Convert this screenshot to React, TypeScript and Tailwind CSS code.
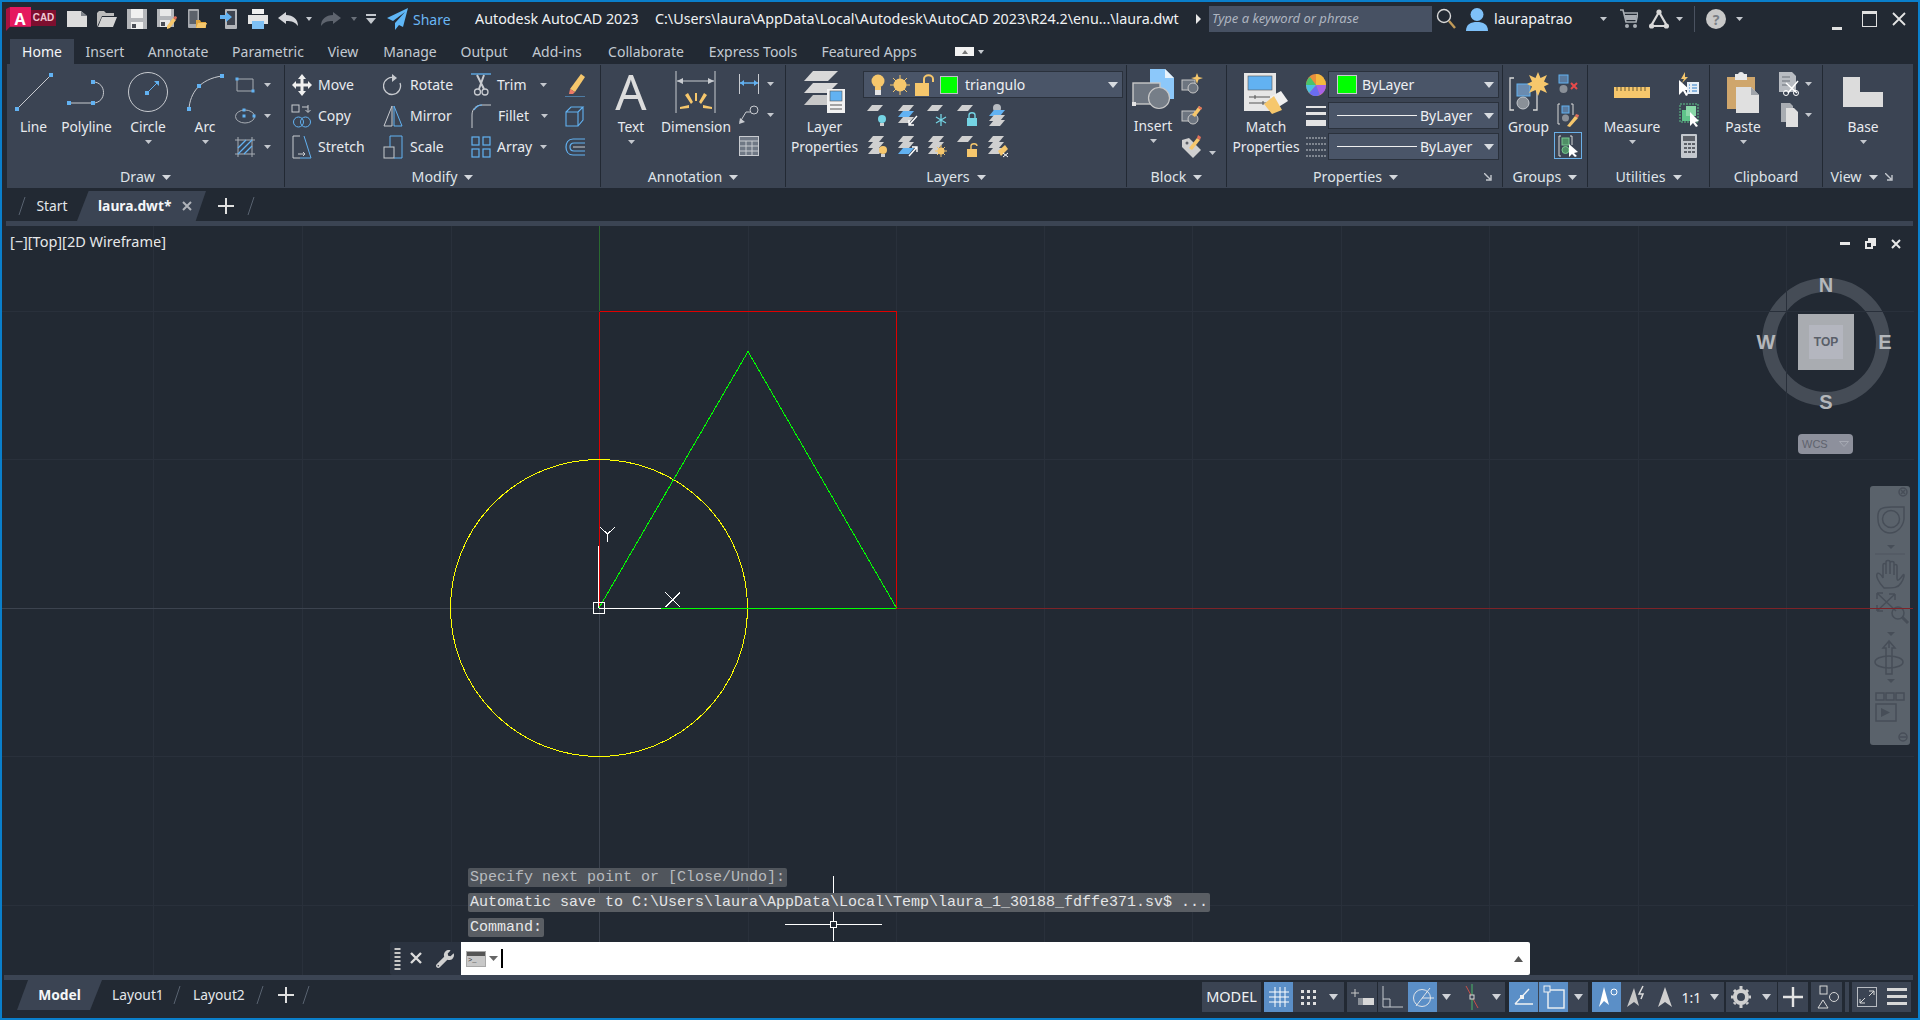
import React from "react";
import { FaWrench } from "react-icons/fa";

const G = "#c8cbd0";
const D = "#a8adb4";
const B = "#62b2f2";
const Y = "#f6c76c";
const W = "#ffffff";

type SP = { w: number; h: number; children?: React.ReactNode };
const S = ({ w, h, children }: SP) => (
  <svg width={w} height={h} viewBox={`0 0 ${w} ${h}`} fill="none" className="shrink-0">
    {children}
  </svg>
);
const Sq = ({ x, y, s = 4, c = B }: { x: number; y: number; s?: number; c?: string }) => (
  <rect x={x - s / 2} y={y - s / 2} width={s} height={s} fill={c} />
);

const Caret = ({ c = "#c4c8ce", w = 8, h = 5 }: { c?: string; w?: number; h?: number }) => (
  <S w={w} h={h}>
    <path d={`M0 0H${w}L${w / 2} ${h}Z`} fill={c} />
  </S>
);
const Slash = () => (
  <S w={10} h={20}>
    <path d="M8 1L2 19" stroke="#586270" />
  </S>
);
const Expander = () => (
  <S w={8} h={8}>
    <path d="M0 0L6 6M7 2V7H2" stroke="#c4c8ce" strokeWidth="1.4" />
  </S>
);

/* ---------- quick access ---------- */
const INew = () => (
  <S w={20} h={16}><path d="M0 0H14L20 5V16H0Z" fill="#dcdcdc" /><path d="M14 0V5H20Z" fill="#7e838a" /></S>
);
const IOpen = () => (
  <S w={20} h={16}><path d="M0 16V2L2 0H7L9 2H17V5H5L0 16Z" fill="#bcbcbc" /><path d="M5 6H20L16 16H1Z" fill="#d4d4d4" /></S>
);
const ISave = () => (
  <S w={20} h={20}><path d="M0 0H20V20H0Z" fill="#b4b6ba" /><path d="M4 0H16V9H4Z" fill="#f0f0f0" /><path d="M4 13H16V20H4Z" fill="#f0f0f0" /><path d="M5 15H9V19H5Z" fill="#4a4e56" /></S>
);
const ISaveAs = () => (
  <S w={20} h={20}><path d="M0 0H17V18H0Z" fill="#b4b6ba" /><path d="M3 0H14V7H3Z" fill="#e8e8e8" /><path d="M3 11H13V18H3Z" fill="#e8e8e8" /><path d="M4 13H8V17H4Z" fill="#4a4e56" /><path d="M10 17L16 9L19 11L13 19L10 20Z" fill={Y} /><path d="M16 9L19 11L20 8L18 7Z" fill="#e2705a" /></S>
);
const IWebOpen = () => (
  <S w={19} h={20}><rect x="0" y="0" width="11" height="19" rx="1" fill="#a8abb0" /><rect x="1.500" y="2" width="8" height="13" fill="#5c626b" /><path d="M8 11H12L13 13H18V19H8Z" fill="#e0a53e" /><path d="M8 19L10 14H19L17 19Z" fill={Y} /></S>
);
const IWebSave = () => (
  <S w={17} h={20}><rect x="5" y="0" width="12" height="20" rx="1" fill="#b4b6ba" /><rect x="7" y="2" width="8" height="14" fill="#3f4550" /><path d="M0 6H6V3L12 8L6 13V10H0Z" fill={B} /></S>
);
const IPrint = () => (
  <S w={20} h={20}><path d="M4 0H16V5H4Z" fill="#f0f0f0" /><path d="M0 6H20V15H0Z" fill="#e4e4e4" /><path d="M4 12H16V20H4Z" fill="#7ec0f4" /></S>
);
const IUndo = () => (
  <S w={20} h={14}><path d="M0 6L8 0V3C15 3 20 7 20 14C17 10 14 9 8 9V12Z" fill="#d4d6da" /></S>
);
const IRedo = () => (
  <S w={20} h={14}><path d="M20 6L12 0V3C5 3 0 7 0 14C3 10 6 9 12 9V12Z" fill="#5e646e" /></S>
);
const IPlane = () => (
  <S w={21} h={22}><path d="M21 0L0 10L6 13L18 4L8 15V22L12 17L16 19Z" fill="#5fb6f6" /></S>
);

/* ---------- draw ---------- */
const ILine = () => (
  <S w={40} h={40}><path d="M3 37L37 3" stroke={G} /><Sq x={3} y={37} /><Sq x={37} y={3} /></S>
);
const IPoly = () => (
  <S w={42} h={26}><path d="M3 24H27M27 3C41 3 41 24 27 24" stroke={G} /><Sq x={3} y={24} /><Sq x={27} y={24} /><Sq x={27} y={3} /></S>
);
const ICircle = () => (
  <S w={42} h={42}><circle cx="21" cy="21" r="19.500" stroke={G} /><path d="M20 22L31 11" stroke={B} /><path d="M27 10H32V15Z" fill={B} /><Sq x={20} y={22} /></S>
);
const IArc = () => (
  <S w={38} h={38}><path d="M3 36C4 20 14 6 36 3" stroke={G} /><Sq x={3} y={36} /><Sq x={13} y={13} /><Sq x={36} y={3} /></S>
);
const IRectS = () => (
  <S w={20} h={16}><path d="M2 2H18V14H2Z" stroke={D} /><Sq x={2} y={2} s={3} /><Sq x={18} y={14} s={3} /></S>
);
const IEllS = () => (
  <S w={22} h={16}><ellipse cx="11" cy="8.500" rx="9.500" ry="6.500" stroke={D} /><Sq x={10} y={2} s={3} /><Sq x={20} y={8} s={3} /><Sq x={10} y={8} s={3} /></S>
);
const IHatch = () => (
  <S w={20} h={20}><path d="M0 3H20M0 17H20M3 0V20M17 0V20" stroke={D} /><path d="M3 11L11 3M3 17L17 3M9 17L17 9" stroke={B} strokeWidth="1.300" /></S>
);

/* ---------- modify ---------- */
const IMove = () => (
  <S w={20} h={22}><path d="M10 0L14 5H11.500V9.500H16V7L20 11L16 15V12.500H11.500V17H14L10 22L6 17H8.500V12.500H4V15L0 11L4 7V9.500H8.500V5H6Z" fill="#f0f0f0" /></S>
);
const ICopy = () => (
  <S w={22} h={24}><rect x="1" y="1" width="7" height="7" stroke={G} fill="none" /><path d="M11 3H17M17 1V8M14.500 6L17 8.500L19.500 6" stroke={G} /><circle cx="7.500" cy="18" r="5" stroke={B} /><circle cx="14.500" cy="18" r="5" stroke={B} /></S>
);
const IStretch = () => (
  <S w={20} h={24}><path d="M8 23H1V1H8" stroke={G} /><path d="M12 1L19 23H8" stroke={B} /><path d="M6 19H13M11 17L13 19L11 21" stroke={G} /></S>
);
const IRotate = () => (
  <S w={20} h={24}><path d="M12 5A8.500 8.500 0 1 0 17 10" stroke={G} strokeWidth="1.300" /><path d="M9 1L14 5L9 9Z" fill={G} /></S>
);
const IMirror = () => (
  <S w={20} h={24}><path d="M9 2L1 22H9Z" stroke={G} /><path d="M11 2L19 22H11Z" stroke={B} /></S>
);
const IScale = () => (
  <S w={20} h={24}><rect x="1" y="12" width="10" height="11" stroke={G} /><path d="M7 12V1H19V23H11" stroke={B} /></S>
);
const ITrim = () => (
  <S w={20} h={24}><path d="M0 1H20" stroke={B} strokeWidth="1.300" /><path d="M6 2L13 16M13 2L8 16" stroke={G} strokeWidth="2" /><circle cx="6.500" cy="19" r="3" stroke={G} strokeWidth="1.300" /><circle cx="14" cy="19" r="3" stroke={G} strokeWidth="1.300" /></S>
);
const IFillet = () => (
  <S w={20} h={24}><path d="M1 24V11C1 5 5 1 11 1H20" stroke={G} /><path d="M3 6C5 3 8 1 11 1" stroke={B} strokeWidth="1.200" /></S>
);
const IArray = () => (
  <S w={20} h={22}><rect x="1" y="1" width="7" height="8" stroke={B} strokeWidth="1.200" /><rect x="12" y="1" width="7" height="8" stroke={B} strokeWidth="1.200" /><rect x="1" y="13" width="7" height="8" stroke={B} strokeWidth="1.200" /><rect x="12" y="13" width="7" height="8" stroke={B} strokeWidth="1.200" /></S>
);
const IErase = () => (
  <S w={20} h={24}><path d="M5 16L16 1L20 4L10 19Z" fill={Y} /><path d="M5 16L10 19L8 21H4Z" fill="#ec7a66" /><path d="M0 24H20" stroke={B} /></S>
);
const IExplode = () => (
  <S w={20} h={22}><path d="M1 7H13V21H1ZM1 7L6 2H18L13 7M18 2V15L13 21" stroke={B} strokeWidth="1.100" /></S>
);
const IOffset = () => (
  <S w={20} h={20}><path d="M20 2H8C3 2 1 6 1 10C1 14 3 18 8 18H20M20 6H9C6 6 5 8 5 10C5 12 6 14 9 14H20" stroke={B} strokeWidth="1.200" /><path d="M8 10H20" stroke={G} /></S>
);

/* ---------- annotation ---------- */
const IDim = () => (
  <S w={42} h={42}><path d="M1 0V42M40 0V42" stroke={G} /><path d="M2 10H39" stroke={G} /><path d="M2 10L8 7V13ZM39 10L33 7V13Z" fill={G} /><path d="M20 22H22L22 30H20ZM10 24L13 22L18 31L16 33ZM32 24L29 22L24 31L26 33ZM5 36L14 34V37L5 38ZM37 36L28 34V37L37 38Z" fill={Y} /></S>
);
const IDimS = () => (
  <S w={20} h={20}><path d="M0.500 0V20M19.500 0V20" stroke={G} /><path d="M1 9H19" stroke={B} strokeWidth="1.500" /><path d="M1 9L5 6V12ZM19 9L15 6V12Z" fill={B} /></S>
);
const ILeader = () => (
  <S w={20} h={20}><circle cx="15" cy="5" r="4" stroke={G} /><path d="M11 7H7L1 17" stroke={G} /><path d="M0 19L1 13L6 17Z" fill={G} /></S>
);
const ITable = () => (
  <S w={20} h={20}><rect x="0.500" y="0.500" width="19" height="19" fill="#6f7885" stroke={G} /><path d="M0 5H20M0 10H20M0 15H20M7 5V20M13 5V20" stroke={G} /></S>
);

/* ---------- layers ---------- */
const ILayerProps = () => (
  <S w={42} h={42}>
    <path d="M9 0H34L24 10H0Z" fill="#d8d8d8" />
    <path d="M9 12H34L24 22H0Z" fill="#d8d8d8" />
    <path d="M9 24H34L24 34H0Z" fill="#c8c8c8" />
    <rect x="23" y="18" width="18" height="24" fill="#f2f2f2" />
    <rect x="26" y="20" width="12" height="10" fill={B} stroke="#555" strokeWidth="0.600" />
    <path d="M26 34H38M26 38H38" stroke="#555" />
  </S>
);
const Plate = ({ y = 0, c = "#d0d0d0", x = 0 }: { y?: number; c?: string; x?: number }) => (
  <path d={`M${x + 5} ${y}H${x + 16}L${x + 11} ${y + 6}H${x}Z`} fill={c} />
);
const ILay = ({ n }: { n: number }) => {
  const plates3 = (c = "#d0d0d0") => (
    <>
      <Plate y={1} c={c} x={1} />
      <Plate y={7} c={c} x={1} />
      <Plate y={13} c={c} x={1} />
    </>
  );
  const items: Record<number, React.ReactNode> = {
    0: <><Plate y={1} x={0} /><circle cx="15" cy="15" r="4" fill="#74d4e4" /><rect x="13" y="19" width="4" height="3" fill="#d0d0d0" /></>,
    1: <><Plate y={1} x={1} /><Plate y={7} c={B} x={1} /><Plate y={13} x={1} /><path d="M20 12L12 21M12 16V21H17" stroke={W} strokeWidth="1.400" /></>,
    2: <><Plate y={1} x={0} /><path d="M14 10V22M9 13L19 19M19 13L9 19" stroke="#74d4e4" strokeWidth="1.300" /></>,
    3: <><Plate y={1} x={0} /><rect x="10" y="14" width="10" height="8" fill="#74d4e4" /><path d="M12 14V11C12 8 18 8 18 11V14" stroke="#74d4e4" strokeWidth="1.400" /></>,
    4: <><circle cx="10" cy="4" r="4" fill="#b8bcc2" /><Plate y={6} c={B} x={2} /><Plate y={11} x={2} /><Plate y={16} x={2} /></>,
    5: <>{plates3()}<circle cx="16" cy="15" r="4" fill={Y} /><rect x="14" y="19" width="4" height="3" fill="#d0d0d0" /></>,
    6: <><Plate y={1} x={1} /><Plate y={7} x={1} /><Plate y={13} c={B} x={1} /><path d="M12 21L20 12M15 12H20V17" stroke={W} strokeWidth="1.400" /></>,
    7: <>{plates3()}<circle cx="14" cy="16" r="3.500" fill={Y} /><path d="M14 10V22M8 16H20M10 12L18 20M18 12L10 20" stroke={Y} /></>,
    8: <><Plate y={1} x={0} /><rect x="10" y="14" width="10" height="8" fill={Y} /><path d="M14 14V11C14 8 20 8 20 11" stroke={Y} strokeWidth="1.400" /></>,
    9: <>{plates3()}<path d="M11 16L18 10L21 14L14 21Z" fill={Y} /><path d="M16 18L21 22M21 18L16 22" stroke={W} /></>,
  };
  return <S w={22} h={23}>{items[n]}</S>;
};
const IBulb = () => (
  <S w={14} h={22}><circle cx="7" cy="7" r="6.500" fill={Y} /><rect x="4" y="13" width="6" height="3" fill={Y} /><rect x="4" y="16" width="6" height="5" fill="#e4e4e4" /></S>
);
const ISun = () => (
  <S w={20} h={20}><circle cx="10" cy="10" r="6.500" fill={Y} /><path d="M10 0V20M0 10H20M3 3L17 17M17 3L3 17" stroke={Y} /></S>
);
const ILock = () => (
  <S w={20} h={22}><rect x="0" y="9" width="14" height="13" fill={Y} /><path d="M9 9V5C9 0 18 0 18 5V8" stroke={Y} strokeWidth="2" /></S>
);

/* ---------- block ---------- */
const IInsert = () => (
  <S w={42} h={42}>
    <path d="M18 0H33L42 9V30H18Z" fill="#8cc8fa" />
    <path d="M33 0V9H42Z" fill="#e8f2fa" />
    <rect x="1" y="14" width="27" height="21" fill="#6d7580" stroke="#c8c8c8" strokeWidth="1.400" />
    <circle cx="27" cy="29" r="10.500" fill="#767e88" stroke="#c8c8c8" strokeWidth="1.200" />
    <Sq x={2} y={35} c="#e4e4e4" />
  </S>
);
const IBlockA = () => (
  <S w={22} h={22}><rect x="1" y="7" width="13" height="10" stroke="#c8c8c8" fill="#6d7580" /><circle cx="12" cy="15" r="5" fill="#6d7580" stroke="#c8c8c8" /><path d="M16 0L17.500 4L22 5L17.500 6.500L16 11L14.500 6.500L10 5L14.500 4Z" fill={Y} /></S>
);
const IBlockB = () => (
  <S w={22} h={22}><rect x="1" y="7" width="13" height="10" stroke="#c8c8c8" fill="#6d7580" /><circle cx="12" cy="15" r="5" fill="#6d7580" stroke="#c8c8c8" /><path d="M11 11L18 2L21 4L14 13Z" fill={Y} /><path d="M18 2L21 4L20 6L17 4Z" fill="#e2705a" /></S>
);
const IBlockC = () => (
  <S w={22} h={24}><path d="M1 6L8 4L20 16L12 24L1 13Z" fill="#d0d0d0" /><path d="M8 14L16 4L19 6L11 16Z" fill={Y} /><path d="M16 4L19 6L20 3L17 1Z" fill="#e2705a" /><circle cx="6" cy="9" r="1.500" fill="#5c6068" /></S>
);

/* ---------- properties ---------- */
const IMatch = () => (
  <S w={44} h={44}>
    <rect x="0" y="3" width="32" height="38" fill="#e6e6e6" />
    <rect x="4" y="6" width="24" height="14" fill={B} stroke="#555" strokeWidth="0.600" />
    <path d="M5 27H26M5 33H26M11 25V29M19 31V35" stroke="#555" />
    <path d="M26 27L37 21L44 31L33 38Z" fill="#f0f0f0" />
    <path d="M20 34L30 26L38 40L28 44Z" fill={Y} />
  </S>
);
const IWheel = () => (
  <S w={20} h={22}>
    <ellipse cx="10" cy="11" rx="10" ry="11" fill="#e98f3c" />
    <path d="M10 11L10 0A10 11 0 0 1 20 11Z" fill="#f4b93e" />
    <path d="M10 11H20A10 11 0 0 1 14 21Z" fill="#a861e8" />
    <path d="M10 11L14 21A10 11 0 0 1 3 19Z" fill="#6a6cf0" />
    <path d="M10 11L3 19A10 11 0 0 1 0 11Z" fill="#4ac0e0" />
    <path d="M10 11H0A10 11 0 0 1 4 3Z" fill="#48c46c" />
  </S>
);
const ILweight = () => (
  <S w={20} h={22}><rect y="1" width="20" height="2" fill="#e4e4e4" /><rect y="7" width="20" height="3" fill="#e4e4e4" /><rect y="15" width="20" height="6" fill="#e4e4e4" /></S>
);
const ILtype = () => (
  <S w={20} h={20}><path d="M0 1H20M0 7H20M0 13H20M0 19H20" stroke="#c4c8ce" strokeDasharray="2 1" /></S>
);

/* ---------- groups ---------- */
const IGroup = () => (
  <S w={40} h={40}>
    <path d="M5 6H1V38H5M28 14V38H24" stroke="#d8d8d8" strokeWidth="1.300" />
    <rect x="8" y="12" width="13" height="12" fill="#6a8bb0" stroke={B} />
    <circle cx="14" cy="31" r="6" fill="#8a9098" stroke="#c4c8ce" />
    <path d="M29 0L31.500 6L38 3L35 9.500L40 12L35 14.500L38 21L31.500 18L29 24L26.500 18L20 21L23 14.500L18 12L23 9.500L20 3L26.500 6Z" fill={Y} />
  </S>
);
const IGrpA = () => (
  <S w={20} h={20}><rect x="1" y="1" width="9" height="8" fill="#5a7a9e" stroke={B} /><circle cx="5.500" cy="15" r="4" fill="#8a9098" /><path d="M13 9L19 15M19 9L13 15" stroke="#e84a4a" strokeWidth="2" /></S>
);
const IGrpB = () => (
  <S w={22} h={24}><path d="M3 1H1V21H3M14 1H16V12" stroke="#d8d8d8" /><rect x="5" y="3" width="7" height="7" fill="#5a7a9e" stroke={B} /><circle cx="8.500" cy="15" r="3.500" fill="#8a9098" /><path d="M10 23L18 13L21 15L13 24Z" fill={Y} /><path d="M18 13L21 15L22 12L19 11Z" fill="#e2705a" /></S>
);
const IGrpC = () => (
  <S w={20} h={22}><path d="M3 1H1V21H3M12 1H14V10" stroke="#d8d8d8" /><rect x="4" y="3" width="7" height="7" fill="#4f8f66" stroke="#78c890" /><circle cx="7.500" cy="15" r="3.500" fill="#4f8f66" stroke="#78c890" /><path d="M11 9V22L14 19L17 22L19 21L16 18L20 17Z" fill={W} /></S>
);

/* ---------- utilities ---------- */
const IRuler = () => (
  <S w={36} h={11}><rect width="36" height="11" fill={Y} /><path d="M3 0V4M7 0V4M11 0V4M15 0V4M19 0V4M23 0V4M27 0V4M31 0V4" stroke="#6a5a30" /></S>
);
const IQSelect = () => (
  <S w={20} h={24}><path d="M0 8V23L4 19L7 24L9 23L6 18H11Z" fill={W} /><rect x="8" y="10" width="12" height="12" fill="#e6eef6" /><path d="M10 13H11M13 13H18M10 16H11M13 16H18M10 19H11M13 19H18" stroke="#2d7cc8" /><path d="M6 0L2 7H5L3 11L9 5H6Z" fill={Y} /></S>
);
const ISelGrp = () => (
  <S w={20} h={24}><rect x="1" y="1" width="18" height="18" stroke="#5fc48a" strokeDasharray="2 1" /><rect x="3" y="7" width="10" height="11" fill="#5fc48a" /><rect x="7" y="3" width="10" height="10" fill="#8ad8a8" /><path d="M11 9V23L14 20L17 24L19 23L16 19L20 18Z" fill={W} /></S>
);
const ICalc = () => (
  <S w={16} h={24}><rect width="16" height="24" rx="1" fill="#c4c8ce" /><rect x="2" y="2" width="12" height="5" fill="#5c6068" /><path d="M3 10H6M7 10H10M11 10H14M3 14H6M7 14H10M11 14H14M3 18H6M7 18H10M11 18H14" stroke="#5c6068" strokeWidth="2" /></S>
);

/* ---------- clipboard / view ---------- */
const IPaste = () => (
  <S w={32} h={41}>
    <rect x="0" y="5" width="28" height="32" fill="#cfa66c" />
    <rect x="8" y="2" width="12" height="6" fill="#e8e8e8" />
    <circle cx="14" cy="3" r="3" fill="#e8e8e8" />
    <path d="M9 15H24L32 23V41H9Z" fill="#e0e0e0" />
    <path d="M24 15V23H32Z" fill="#a0a4aa" />
  </S>
);
const ICut = () => (
  <S w={22} h={24}><path d="M1 0H14L18 4V20H1Z" fill="#b8bcc2" /><path d="M4 5H12M4 9H12M4 13H10" stroke="#6a7079" /><path d="M8 11L19 21M20 9L10 21" stroke={W} strokeWidth="1.500" /><circle cx="8" cy="21" r="2.500" stroke={W} /><circle cx="18" cy="21" r="2.500" stroke={W} /></S>
);
const ICopyS = () => (
  <S w={18} h={24}><path d="M1 0H10L13 3V19H1Z" fill="#a8acb2" /><path d="M6 5H14L18 9V24H6Z" fill="#e0e0e0" /></S>
);
const IBase = () => (
  <S w={40} h={30}><path d="M0 0H17V15H40V30H0Z" fill="#dcdcdc" /></S>
);

/* ---------- top right ---------- */
const ISearch = () => (
  <S w={20} h={22}><circle cx="8" cy="8" r="6.500" stroke="#d8d8d8" strokeWidth="1.400" /><path d="M13 13L19 20" stroke="#c09a58" strokeWidth="2.400" /></S>
);
const IUser = () => (
  <S w={22} h={24}><circle cx="11" cy="7.500" r="6.500" fill="#7ec0f8" /><path d="M0 24C0 17 5 15 11 15C17 15 22 17 22 24Z" fill="#7ec0f8" /></S>
);
const ICart = () => (
  <S w={18} h={20}><path d="M0 1H3L6 13H16L18 4H4" stroke={D} strokeWidth="1.600" /><path d="M4 6H17L16 11H6Z" fill={D} /><circle cx="7" cy="17" r="2" fill={D} /><circle cx="15" cy="17" r="2" fill={D} /></S>
);
const IA360 = () => (
  <S w={20} h={20}><path d="M10 3L2 17H18Z" stroke="#d8d8d8" strokeWidth="2.200" /><circle cx="10" cy="3" r="2.600" fill="#d8d8d8" /><circle cx="2.600" cy="17" r="2.600" fill="#d8d8d8" /><circle cx="17.400" cy="17" r="2.600" fill="#d8d8d8" /></S>
);

/* ---------- ribbon building blocks ---------- */
const Big = ({ w, icon, label, caret, two }: { w: string; icon: React.ReactNode; label: string; caret?: boolean; two?: string }) => (
  <div className={`${w} flex shrink-0 flex-col items-center pt-[4px]`}>
    <div className="flex h-[48px] items-center justify-center">{icon}</div>
    <div className="mt-[1px] h-[20px] text-center text-[13.8px] leading-[20px] whitespace-nowrap text-[#e8ebef]">{label}</div>
    {two && <div className="h-[20px] text-center text-[13.8px] leading-[20px] whitespace-nowrap text-[#e8ebef]">{two}</div>}
    {caret && (
      <div className="mt-[3px] flex justify-center">
        <Caret w={7} h={4} />
      </div>
    )}
  </div>
);

const Row = ({ icon, text, caret, iw = "w-[22px]", tw, gap = "ml-[5px]" }: { icon: React.ReactNode; text?: string; caret?: boolean; iw?: string; tw?: string; gap?: string }) => (
  <div className="flex h-[31px] items-center">
    <div className={`${iw} flex shrink-0 items-center justify-center`}>{icon}</div>
    {text && <div className={`${gap} ${tw ?? ""} text-[14px] whitespace-nowrap text-[#e8ebef]`}>{text}</div>}
    {caret && <Caret w={7} h={4} />}
  </div>
);

const Panel = ({ w, label, caret = true, children, exp }: { w: string; label: string; caret?: boolean; children: React.ReactNode; exp?: string }) => (
  <div className={`${w} flex h-[124px] shrink-0 flex-col`}>
    <div className="relative flex h-[103px]">{children}</div>
    <div className="flex h-[20px] items-center">
      <div className="flex flex-1 items-center justify-center gap-[7px] text-[14.2px] text-[#dfe3e8]">
        <span>{label}</span>
        {caret && <Caret w={9} h={5} c="#d4d8dd" />}
      </div>
      {exp && (
        <div className={`${exp} flex items-center`}>
          <Expander />
        </div>
      )}
    </div>
  </div>
);

const Sep = () => <div className="my-[1px] w-[1px] shrink-0 bg-[#222933]" />;

const Combo = ({ children, w }: { children: React.ReactNode; w: string }) => (
  <div className={`${w} flex h-[27px] shrink-0 items-center border border-[#2a313c] bg-[#4a5568] text-[14px] text-[#eef0f3]`}>
    {children}
    <div className="mr-[4px] ml-auto">
      <Caret w={10} h={6} c="#d8dce1" />
    </div>
  </div>
);

/* ---------- status bar ---------- */
const St = ({ w, on, children }: { w: string; on?: boolean; children?: React.ReactNode }) => (
  <div className={`${w} flex h-[30px] shrink-0 items-center justify-center ${on ? "bg-[#5b8fc7]" : ""}`}>{children}</div>
);
const Grp = ({ children, m = "" }: { children: React.ReactNode; m?: string }) => <div className={`${m} flex h-[30px] shrink-0 items-center bg-[#3b4453]`}>{children}</div>;
const SC = ({ w = "w-[12px]" }: { w?: string }) => (
  <div className={`${w} flex shrink-0 justify-center`}>
    <Caret w={9} h={6} c="#d0d3d8" />
  </div>
);

const App = () => {
  const gridX = [153, 302, 451, 748, 896, 1044, 1192, 1341, 1489, 1638, 1786];
  const gridY = [311, 459, 756, 905];
  return (
    <div className="flex h-[1020px] w-[1920px] flex-col overflow-hidden border-2 border-[#0a7fcb] bg-[#222933] font-['Noto_Sans','Open_Sans',sans-serif]">
      {/* title bar */}
      <div className="flex h-[34px] shrink-0 items-center text-[14.3px] text-[#f0f2f4]">
        <div className="ml-[4px] flex w-[50px] shrink-0 items-center">
          <div className="flex h-[24px] w-[25px] items-center justify-center bg-[linear-gradient(90deg,#a8123f_16%,#e5195f_16%)] pl-[3px] text-[16px] font-bold text-white [clip-path:polygon(0_8%,16%_0,100%_0,100%_82%,16%_82%,0_100%)]">A</div>
          <div className="mb-[3px] flex h-[16px] w-[25px] items-center justify-center bg-[#7d0f2f] font-['Liberation_Sans',sans-serif] text-[10px] font-bold text-[#f0c8d4]">CAD</div>
        </div>
        <div className="ml-[6px] flex w-[30px] shrink-0 justify-center"><INew /></div>
        <div className="flex w-[30px] shrink-0 justify-center"><IOpen /></div>
        <div className="flex w-[30px] shrink-0 justify-center"><ISave /></div>
        <div className="flex w-[30px] shrink-0 justify-center"><ISaveAs /></div>
        <div className="flex w-[30px] shrink-0 justify-center"><IWebOpen /></div>
        <div className="ml-[1px] flex w-[30px] shrink-0 justify-center"><IWebSave /></div>
        <div className="flex w-[29px] shrink-0 justify-center"><IPrint /></div>
        <div className="ml-[1px] flex w-[30px] shrink-0 justify-center"><IUndo /></div>
        <div className="flex w-[12px] shrink-0 justify-center"><Caret w={6} h={4} /></div>
        <div className="ml-[1px] flex w-[30px] shrink-0 justify-center"><IRedo /></div>
        <div className="ml-[2px] flex w-[12px] shrink-0 justify-center"><Caret w={6} h={4} c="#6a7079" /></div>
        <div className="ml-[5px] flex w-[12px] shrink-0 flex-col items-center gap-[2px]">
          <div className="h-[2px] w-[10px] bg-[#c4c8ce]" />
          <Caret w={10} h={6} />
        </div>
        <div className="ml-[8px] flex w-[24px] shrink-0 justify-center"><IPlane /></div>
        <div className="ml-[4px] w-[62px] shrink-0 text-[14px] text-[#6ab7f5]">Share</div>
        <div className="w-[180px] shrink-0 whitespace-nowrap">Autodesk AutoCAD 2023</div>
        <div className="w-[537px] shrink-0 whitespace-nowrap">C:\Users\laura\AppData\Local\Autodesk\AutoCAD 2023\R24.2\enu...\laura.dwt</div>
        <div className="flex w-[12px] shrink-0 justify-center">
          <S w={5} h={10}><path d="M0 0L5 5L0 10Z" fill="#e8e8e8" /></S>
        </div>
        <div className="ml-[5px] flex h-[26px] w-[223px] shrink-0 items-center bg-[#475163] pl-[3px] text-[13px] text-[#aeb5c0] italic">Type a keyword or phrase</div>
        <div className="ml-[1px] flex w-[26px] shrink-0 justify-center"><ISearch /></div>
        <div className="ml-[6px] flex w-[24px] shrink-0 justify-center"><IUser /></div>
        <div className="ml-[5px] w-[103px] shrink-0">laurapatrao</div>
        <div className="flex w-[12px] shrink-0 justify-center"><Caret w={7} h={4} /></div>
        <div className="ml-[8px] flex w-[24px] shrink-0 justify-center"><ICart /></div>
        <div className="ml-[6px] flex w-[24px] shrink-0 justify-center"><IA360 /></div>
        <div className="ml-[2px] flex w-[12px] shrink-0 justify-center"><Caret w={7} h={4} /></div>
        <div className="ml-[9px] h-[26px] w-[1px] shrink-0 bg-[#4a5260]" />
        <div className="ml-[9px] flex w-[24px] shrink-0 justify-center">
          <div className="flex h-[20px] w-[20px] items-center justify-center rounded-full bg-[#c8c8c8] text-[14px] font-bold text-[#7a7f86]">?</div>
        </div>
        <div className="ml-[5px] flex w-[12px] shrink-0 justify-center"><Caret w={7} h={4} /></div>
        <div className="ml-[79px] flex h-[24px] w-[26px] shrink-0 items-end justify-center pb-[1px]">
          <div className="h-[3px] w-[10px] bg-[#e0e0e0]" />
        </div>
        <div className="ml-[6px] flex w-[26px] shrink-0 justify-center">
          <div className="h-[16px] w-[15px] border-[1.5px] border-t-[3px] border-[#e0e0e0]" />
        </div>
        <div className="ml-[4px] flex w-[26px] shrink-0 justify-center">
          <S w={14} h={14}><path d="M1 1L13 13M13 1L1 13" stroke="#e4e4e4" strokeWidth="1.800" /></S>
        </div>
      </div>

      {/* ribbon tabs */}
      <div className="flex h-[28px] shrink-0 items-end text-[14px] text-[#c2c9d2]">
        <div className="ml-[8px] flex h-[25px] w-[64px] items-center justify-center bg-[#3b4453] text-[#f4f6f8]">Home</div>
        <div className="flex h-[25px] w-[62px] items-center justify-center">Insert</div>
        <div className="flex h-[25px] w-[84px] items-center justify-center">Annotate</div>
        <div className="flex h-[25px] w-[96px] items-center justify-center">Parametric</div>
        <div className="flex h-[25px] w-[54px] items-center justify-center">View</div>
        <div className="flex h-[25px] w-[80px] items-center justify-center">Manage</div>
        <div className="flex h-[25px] w-[68px] items-center justify-center">Output</div>
        <div className="flex h-[25px] w-[78px] items-center justify-center">Add-ins</div>
        <div className="flex h-[25px] w-[100px] items-center justify-center">Collaborate</div>
        <div className="flex h-[25px] w-[114px] items-center justify-center">Express Tools</div>
        <div className="flex h-[25px] w-[118px] items-center justify-center">Featured Apps</div>
        <div className="ml-[27px] flex h-[25px] items-center gap-[4px]">
          <div className="flex h-[9px] w-[19px] items-center justify-center bg-[#f2f2f2]">
            <S w={6} h={4}><path d="M3 0L6 4H0Z" fill="#777" /></S>
          </div>
          <Caret w={6} h={4} />
        </div>
      </div>

      {/* ribbon */}
      <div className="ml-[5px] flex h-[124px] w-[1906px] shrink-0 bg-[#3b4453]">
        <Panel w="w-[277px]" label="Draw">
          <Big w="w-[53px]" icon={<ILine />} label="Line" />
          <Big w="w-[53px]" icon={<IPoly />} label="Polyline" />
          <Big w="w-[70px]" icon={<ICircle />} label="Circle" caret />
          <Big w="w-[44px]" icon={<IArc />} label="Arc" caret />
          <div className="ml-[7px] flex flex-col pt-[5px]">
            <Row icon={<IRectS />} iw="w-[22px]" />
            <Row icon={<IEllS />} iw="w-[22px]" />
            <Row icon={<IHatch />} iw="w-[22px]" />
          </div>
          <div className="ml-[8px] flex flex-col pt-[5px]">
            <div className="flex h-[31px] items-center"><Caret w={7} h={4} /></div>
            <div className="flex h-[31px] items-center"><Caret w={7} h={4} /></div>
            <div className="flex h-[31px] items-center"><Caret w={7} h={4} /></div>
          </div>
        </Panel>
        <Sep />
        <Panel w="w-[315px]" label="Modify">
          <div className="ml-[6px] flex w-[91px] flex-col pt-[5px]">
            <Row icon={<IMove />} text="Move" />
            <Row icon={<ICopy />} text="Copy" />
            <Row icon={<IStretch />} text="Stretch" />
          </div>
          <div className="flex w-[88px] flex-col pt-[5px]">
            <Row icon={<IRotate />} text="Rotate" gap="ml-[6px]" />
            <Row icon={<IMirror />} text="Mirror" gap="ml-[6px]" />
            <Row icon={<IScale />} text="Scale" gap="ml-[6px]" />
          </div>
          <div className="flex w-[94px] flex-col pt-[5px]">
            <Row icon={<ITrim />} text="Trim" tw="w-[43px]" caret />
            <Row icon={<IFillet />} text="Fillet" tw="w-[43px]" caret gap="ml-[6px]" />
            <Row icon={<IArray />} text="Array" tw="w-[43px]" caret />
          </div>
          <div className="flex flex-col pt-[5px]">
            <Row icon={<IErase />} />
            <Row icon={<IExplode />} />
            <Row icon={<IOffset />} />
          </div>
        </Panel>
        <Sep />
        <Panel w="w-[184px]" label="Annotation">
          <Big w="w-[60px]" icon={<div className="h-[48px] text-[49px] leading-[46px] text-[#dcdcdc]">A</div>} label="Text" caret />
          <Big w="w-[70px]" icon={<IDim />} label="Dimension" />
          <div className="flex flex-col pt-[4px]">
            <Row icon={<IDimS />} iw="w-[36px]" />
            <Row icon={<ILeader />} iw="w-[36px]" />
            <Row icon={<ITable />} iw="w-[36px]" />
          </div>
          <div className="flex flex-col pt-[4px]">
            <div className="flex h-[31px] items-center"><Caret w={7} h={4} /></div>
            <div className="flex h-[31px] items-center"><Caret w={7} h={4} /></div>
          </div>
        </Panel>
        <Sep />
        <Panel w="w-[340px]" label="Layers">
          <Big w="w-[77px]" icon={<ILayerProps />} label="Layer" two="Properties" />
          <div className="flex flex-col pt-[7px]">
            <Combo w="w-[260px]">
              <div className="ml-[7px] flex w-[14px] justify-center"><IBulb /></div>
              <div className="ml-[5px] flex w-[20px] justify-center"><ISun /></div>
              <div className="ml-[5px] flex w-[20px] justify-center"><ILock /></div>
              <div className="ml-[5px] h-[18px] w-[18px] shrink-0 border border-[#bfc3c8] bg-[#00ff00]" />
              <span className="ml-[7px]">triangulo</span>
            </Combo>
            <div className="mt-[2px] grid w-[150px] grid-cols-5">
              {[0, 1, 2, 3, 4, 5, 6, 7, 8, 9].map((n) => (
                <div key={n} className="flex h-[31px] items-center justify-center">
                  <ILay n={n} />
                </div>
              ))}
            </div>
          </div>
        </Panel>
        <Sep />
        <Panel w="w-[99px]" label="Block">
          <div className="flex w-[52px] flex-col items-center pt-[2px]">
            <div className="flex h-[48px] items-center justify-center"><IInsert /></div>
            <div className="mt-[2px] h-[20px] text-[13.8px] leading-[20px] text-[#e8ebef]">Insert</div>
            <div className="mt-[3px]"><Caret w={7} h={4} /></div>
          </div>
          <div className="flex flex-col pt-[4px]">
            <Row icon={<IBlockA />} iw="w-[26px]" />
            <Row icon={<IBlockB />} iw="w-[26px]" />
            <Row icon={<IBlockC />} iw="w-[26px]" />
          </div>
          <div className="flex flex-col justify-end pb-[12px] pl-[4px]"><Caret w={7} h={4} /></div>
        </Panel>
        <Sep />
        <Panel w="w-[275px]" label="Properties" exp="w-[18px]">
          <Big w="w-[78px]" icon={<IMatch />} label="Match" two="Properties" />
          <div className="flex w-[22px] flex-col gap-[4px] pt-[7px]">
            <div className="flex h-[27px] items-center justify-center"><IWheel /></div>
            <div className="flex h-[27px] items-center justify-center"><ILweight /></div>
            <div className="flex h-[27px] items-center justify-center"><ILtype /></div>
          </div>
          <div className="ml-[1px] flex flex-col gap-[4px] pt-[7px]">
            <Combo w="w-[171px]">
              <div className="ml-[8px] h-[19px] w-[20px] shrink-0 border border-[#c8ccd0] bg-[#00ff00]" />
              <span className="ml-[5px]">ByLayer</span>
            </Combo>
            <Combo w="w-[171px]">
              <div className="ml-[8px] h-[1px] w-[80px] shrink-0 bg-[#f0f0f0]" />
              <span className="ml-[3px]">ByLayer</span>
            </Combo>
            <Combo w="w-[171px]">
              <div className="ml-[8px] h-[1px] w-[80px] shrink-0 bg-[#f0f0f0]" />
              <span className="ml-[3px]">ByLayer</span>
            </Combo>
          </div>
        </Panel>
        <Sep />
        <Panel w="w-[84px]" label="Groups">
          <Big w="w-[51px]" icon={<IGroup />} label="Group" />
          <div className="flex flex-col pt-[4px]">
            <Row icon={<IGrpA />} iw="w-[28px]" />
            <Row icon={<IGrpB />} iw="w-[28px]" />
            <div className="mt-[2px] flex h-[27px] w-[28px] items-center justify-center border border-[#6ab0e8]"><IGrpC /></div>
          </div>
        </Panel>
        <Sep />
        <Panel w="w-[121px]" label="Utilities">
          <Big w="w-[88px]" icon={<IRuler />} label="Measure" caret />
          <div className="flex flex-col pt-[4px]">
            <Row icon={<IQSelect />} iw="w-[26px]" />
            <Row icon={<ISelGrp />} iw="w-[26px]" />
            <Row icon={<ICalc />} iw="w-[26px]" />
          </div>
        </Panel>
        <Sep />
        <Panel w="w-[112px]" label="Clipboard" caret={false}>
          <Big w="w-[66px]" icon={<IPaste />} label="Paste" caret />
          <div className="flex flex-col pt-[4px]">
            <Row icon={<ICut />} iw="w-[26px]" />
            <Row icon={<ICopyS />} iw="w-[26px]" />
          </div>
          <div className="flex flex-col pt-[4px] pl-[3px]">
            <div className="flex h-[31px] items-center"><Caret w={7} h={4} /></div>
            <div className="flex h-[31px] items-center"><Caret w={7} h={4} /></div>
          </div>
        </Panel>
        <Sep />
        <Panel w="w-[90px]" label="View" exp="w-[28px]">
          <Big w="w-[80px]" icon={<IBase />} label="Base" caret />
        </Panel>
      </div>

      {/* document tabs */}
      <div className="flex h-[33px] shrink-0 items-end text-[13.8px] text-[#e4e7eb]">
        <div className="ml-[15px] flex h-[30px] w-[10px] items-center"><Slash /></div>
        <div className="flex h-[30px] w-[50px] items-center justify-center">Start</div>
        <div className="flex h-[30px] w-[129px] items-center bg-[#3b4453] pl-[21px] font-bold text-[#f4f6f8] [clip-path:polygon(9%_0,100%_0,92%_100%,0_100%)]">
          <span className="w-[84px] whitespace-nowrap">laura.dwt*</span>
          <S w={10} h={10}><path d="M1 1L9 9M9 1L1 9" stroke="#b0b4ba" strokeWidth="2" /></S>
        </div>
        <div className="ml-[5px] flex h-[30px] w-[30px] items-center justify-center">
          <S w={16} h={16}><path d="M8 0V16M0 8H16" stroke="#e0e0e0" strokeWidth="2" /></S>
        </div>
        <div className="ml-[5px] flex h-[30px] w-[10px] items-center"><Slash /></div>
      </div>
      <div className="ml-[4px] h-[5px] w-[1907px] shrink-0 bg-[#3b4453]" />

      {/* viewport */}
      <div className="relative flex-1">
        <div className="absolute top-[6px] left-[8px] text-[14.5px] leading-[18px] whitespace-nowrap text-[#e6e8ea]">[−][Top][2D Wireframe]</div>
        <div className="absolute top-[12px] left-[1838px] flex items-center gap-[15px]">
          <div className="h-[3px] w-[10px] bg-[#e8e8e8]" />
          <S w={11} h={11}><path d="M3 0H11V8H8V3H3Z" fill="#e8e8e8" /><rect x="1" y="4" width="6" height="6" stroke="#e8e8e8" strokeWidth="2" /></S>
          <S w={10} h={10}><path d="M1 1L9 9M9 1L1 9" stroke="#e8e8e8" strokeWidth="2" /></S>
        </div>

        {/* compass */}
        <div className="absolute top-[49px] left-[1750px] h-[134px] w-[148px] font-['Liberation_Sans',sans-serif]">
          <svg width="148" height="134" className="absolute top-0 left-0" fill="none">
            <circle cx="74" cy="67" r="57" stroke="#454c56" strokeWidth="14" />
          </svg>
          <div className="absolute top-[39px] left-[46px] flex h-[56px] w-[56px] items-center justify-center bg-[#a9acb1]">
            <div className="flex h-[34px] w-[34px] items-center justify-center bg-[#b4b6bf] text-[12px] font-bold text-[#5a5f69]">TOP</div>
          </div>
          <div className="absolute top-0 left-[64px] w-[20px] text-center text-[20px] leading-[20px] font-bold text-[#b4b7bb]">N</div>
          <div className="absolute top-[117px] left-[64px] w-[20px] text-center text-[20px] leading-[20px] font-bold text-[#b4b7bb]">S</div>
          <div className="absolute top-[57px] left-[2px] w-[24px] text-center text-[20px] leading-[20px] font-bold text-[#b4b7bb]">W</div>
          <div className="absolute top-[57px] left-[123px] w-[20px] text-center text-[20px] leading-[20px] font-bold text-[#b4b7bb]">E</div>
        </div>
        <div className="absolute top-[208px] left-[1796px] flex h-[20px] w-[55px] items-center justify-between rounded-[4px] bg-[#8d909c] px-[4px] font-['Liberation_Sans',sans-serif] text-[11px] text-[#5f636e]">
          <span>WCS</span>
          <S w={10} h={6}><path d="M0.500 0.500H9.500L5 5.500Z" stroke="#a6a9b3" /></S>
        </div>

        {/* nav bar */}
        <div className="absolute top-[260px] left-[1868px] flex h-[259px] w-[40px] flex-col items-center rounded-[3px] bg-[#5a626b]">
          <svg width="40" height="259" fill="none" stroke="#474e58" strokeWidth="1.500">
            <circle cx="33" cy="6" r="4" />
            <path d="M31 4L35 8M35 4L31 8" />
            <path d="M8 33C7 22 12 21 22 21H34V33C33 41 27 47 20 47C13 47 8 41 8 33Z" />
            <circle cx="21" cy="33" r="8.500" />
            <path d="M17 59H25L21 63Z" fill="#474e58" stroke="none" />
            <path d="M5 68H35" strokeWidth="0.600" />
            <path d="M14 102C8 96 6 90 7 88C8 86 11 88 13 92L13 79C13 77 16 77 16 79V88V76C16 74 20 74 20 76V88V77C20 75 24 75 24 77V89V80C24 78 27 78 27 80V92C27 97 31 92 33 89C35 87 34 93 31 97C28 102 24 102 14 102Z" />
            <path d="M7 107L26 125M25 108L7 125M7 107H13M7 107V113M25 108H19M25 108V114M7 125V119M7 125H13" />
            <circle cx="28" cy="127" r="6" />
            <path d="M32 131L38 137" strokeWidth="3" />
            <path d="M17 146H25L21 150Z" fill="#474e58" stroke="none" />
            <path d="M19 162L19 155M19 155L13 162H16V188H22V162H25Z" />
            <ellipse cx="19" cy="176" rx="14" ry="6" />
            <path d="M17 193H25L21 197Z" fill="#474e58" stroke="none" />
            <rect x="6" y="207" width="8" height="7" />
            <rect x="16" y="207" width="8" height="7" />
            <rect x="26" y="207" width="8" height="7" />
            <rect x="6" y="218" width="20" height="17" />
            <path d="M11 222V231L20 226.500Z" fill="#474e58" stroke="none" />
            <circle cx="33" cy="251" r="4" />
            <path d="M30 251H36" />
          </svg>
        </div>

        {/* drawing */}
        <svg width="1916" height="749" viewBox="2 226 1916 749" className="pointer-events-none absolute top-0 left-0" fill="none" shapeRendering="crispEdges">
          {gridX.map((x) => (
            <path key={x} d={`M${x + 0.5} 226V975`} stroke="#29303b" />
          ))}
          {gridY.map((y) => (
            <path key={y} d={`M2 ${y + 0.5}H1914`} stroke="#29303b" />
          ))}
          <path d="M2 608.500H599M599.500 608V975" stroke="#3c434f" />
          <path d="M599.500 226V311" stroke="#2a6a30" />
          <path d="M896 608.500H1913" stroke="#7d2328" />
          <path d="M599.500 311.500H896.500V608.500M599.500 311.500V608" stroke="#e00000" />
          <circle cx="599" cy="608" r="148.500" stroke="#ffff00" />
          <path d="M599 608L748 351.500L896.500 608" stroke="#00ff00" />
          <path d="M661 608.500H896" stroke="#00ff00" />
          <path d="M598.500 546V608M599 608.500H661" stroke="#ffffff" />
          <rect x="593.500" y="602.500" width="11" height="11" stroke="#ffffff" />
          <path d="M600 527L607.500 534L615 527M607.500 534V542" stroke="#ffffff" />
          <path d="M665.500 592.500L680 607M680 592.500L665.500 607" stroke="#ffffff" />
          <path d="M833.500 876V941M785 924.500H882" stroke="#ffffff" />
          <rect x="830.500" y="921.500" width="6" height="6" fill="#222933" stroke="#ffffff" />
        </svg>

        {/* command line */}
        <div className="absolute bottom-0 left-[388px] flex flex-col items-start font-['Liberation_Mono',monospace] text-[15px] leading-[19px]">
          <div className="ml-[78px] rounded-[2px] bg-[#50555c] px-[2px] whitespace-pre text-[#b8bbbf]">Specify next point or [Close/Undo]:</div>
          <div className="mt-[6px] ml-[78px] rounded-[2px] bg-[#5a5e64] px-[2px] whitespace-pre text-[#e4e5e7]">{"Automatic save to C:\\Users\\laura\\AppData\\Local\\Temp\\laura_1_30188_fdffe371.sv$ ..."}</div>
          <div className="mt-[6px] ml-[78px] rounded-[2px] bg-[#5a5e64] px-[2px] whitespace-pre text-[#e8e9ea]">Command:</div>
          <div className="mt-[5px] flex h-[33px] w-[1140px] font-['Noto_Sans',sans-serif]">
            <div className="flex w-[71px] items-center rounded-l-[2px] bg-[#2b3340]">
              <S w={42} h={33}>
                <path d="M5.500 6V28M9.500 6V28M7.500 6V28" stroke="#c8c8c8" strokeWidth="2" strokeDasharray="2 2" />
                <path d="M21 11L31 21M31 11L21 21" stroke="#dcdcdc" strokeWidth="2.400" />
              </S>
              <FaWrench className="ml-[4px] text-[18px] text-[#d0d0d0]" />
            </div>
            <div className="flex flex-1 items-center rounded-r-[2px] bg-white pr-[7px]">
              <div className="ml-[5px] h-[16px] w-[20px] border border-[#a8a8a8] bg-[#c8c8c8]">
                <div className="h-[4px] bg-[#555]" />
                <div className="pl-[1px] font-['Liberation_Mono',monospace] text-[7px] leading-[9px] text-[#333]">{">_"}</div>
              </div>
              <div className="ml-[3px]"><Caret w={9} h={5} c="#666" /></div>
              <div className="ml-[3px] h-[19px] w-[2px] bg-black" />
              <div className="ml-auto">
                <S w={9} h={6}><path d="M4.500 0L9 6H0Z" fill="#555" /></S>
              </div>
            </div>
          </div>
        </div>
      </div>
      <div className="ml-[2px] h-[5px] w-[1909px] shrink-0 bg-[#3b4453]" />

      {/* bottom */}
      <div className="flex h-[38px] shrink-0 items-start text-[13.8px] text-[#e4e7eb]">
        <div className="ml-[15px] flex h-[30px] w-[85px] items-center justify-center bg-[#3b4453] font-bold text-[#f4f6f8] [clip-path:polygon(13%_0,100%_0,86%_100%,0_100%)]">Model</div>
        <div className="ml-[10px] flex h-[30px] w-[60px] items-center whitespace-nowrap">Layout1</div>
        <div className="flex h-[30px] w-[21px] items-center"><Slash /></div>
        <div className="flex h-[30px] w-[62px] items-center whitespace-nowrap">Layout2</div>
        <div className="flex h-[30px] w-[10px] items-center"><Slash /></div>
        <div className="ml-[13px] flex h-[30px] w-[16px] items-center">
          <S w={16} h={16}><path d="M8 0V16M0 8H16" stroke="#e0e0e0" strokeWidth="2" /></S>
        </div>
        <div className="ml-[7px] flex h-[30px] w-[10px] items-center"><Slash /></div>

        <div className="mt-[2px] ml-auto flex items-center pr-[7px]">
          <Grp>
            <St w="w-[59px]"><span className="text-[14.5px] text-[#f0f2f4]">MODEL</span></St>
          </Grp>
          <Grp m="ml-[3px]">
            <St w="w-[29px]" on>
              <S w={20} h={20}><path d="M6 0V20M11 0V20M16 0V20M0 5H20M0 10H20M0 15H20" stroke="#fff" /></S>
            </St>
            <St w="w-[29px]">
              <S w={16} h={16}>
                {[1, 7, 13].flatMap((x) => [1, 7, 13].map((y) => <rect key={`${x}-${y}`} x={x} y={y} width="3" height="3" fill="#e0e0e0" />))}
              </S>
            </St>
            <SC w="w-[22px]" />
          </Grp>
          <Grp m="ml-[3px]">
            <St w="w-[30px]">
              <S w={24} h={18}><path d="M5 1V9M1 5H9" stroke="#c8c8c8" /><rect x="8" y="10" width="16" height="7" fill="#d8d8d8" /><path d="M8 10H13V17H8Z" fill="#8a9098" /></S>
            </St>
          </Grp>
          <Grp m="ml-[1px]">
            <St w="w-[30px]">
              <S w={22} h={22}><path d="M1 0V21H21M1 13H8V21" stroke="#c4c8ce" /></S>
            </St>
            <St w="w-[29px]" on>
              <S w={22} h={22}><circle cx="10" cy="12" r="8.500" stroke="#e0e4e8" /><path d="M4 20L18 2M10 12H22" stroke="#e0e4e8" /></S>
            </St>
            <SC w="w-[19px]" />
            <St w="w-[31px]">
              <S w={18} h={26}><path d="M3 2L15 24" stroke="#c8504a" /><path d="M9 0V26" stroke="#48b868" /><rect x="7" y="11" width="4" height="4" fill="#3b4453" stroke="#d8d8d8" /></S>
            </St>
            <SC w="w-[18px]" />
          </Grp>
          <Grp m="ml-[4px]">
            <St w="w-[29px]" on>
              <S w={20} h={20}><path d="M1 17L15 2M1 17H19" stroke="#f0f2f4" strokeWidth="1.400" /><Sq x={8} y={10} c="#f0f2f4" /></S>
            </St>
            <div className="w-[1px]" />
            <St w="w-[29px]" on>
              <S w={22} h={24}><rect x="5" y="5" width="16" height="18" stroke="#f0f2f4" strokeWidth="1.400" /><rect x="1" y="1" width="6" height="6" fill="#5b8fc7" stroke="#f0f2f4" /></S>
            </St>
            <SC w="w-[20px]" />
          </Grp>
          <Grp m="ml-[4px]">
            <St w="w-[29px]" on>
              <S w={24} h={24}><path d="M9 2L14 20L9 16L4 22Z" fill="#fff" /><circle cx="19" cy="7" r="3" stroke="#fff" /></S>
            </St>
            <St w="w-[29px]">
              <S w={24} h={24}><path d="M10 3L15 21L10 17L3 22Z" fill="#c8c8c8" /><path d="M19 1L15 9H19L17 14" stroke="#dcdcdc" strokeWidth="1.500" /></S>
            </St>
            <St w="w-[29px]">
              <S w={20} h={24}><path d="M10 2L17 22L10 17L3 22Z" fill="#d0d0d0" /></S>
            </St>
            <St w="w-[25px]"><span className="text-[14px] text-[#f0f2f4]">1:1</span></St>
            <SC w="w-[20px]" />
          </Grp>
          <Grp m="ml-[2px]">
            <St w="w-[30px]">
              <S w={20} h={22}>
                <circle cx="10" cy="11" r="6" stroke="#d0d0d0" strokeWidth="4" />
                <path d="M10 0V22M0 11H20M3 4L17 18M17 4L3 18" stroke="#d0d0d0" strokeWidth="3" strokeDasharray="4 14" />
              </S>
            </St>
            <SC w="w-[21px]" />
          </Grp>
          <Grp m="ml-[1px]">
            <St w="w-[30px]">
              <S w={20} h={22}><path d="M10 1V21M0 11H20" stroke="#e4e4e4" strokeWidth="2.400" /></S>
            </St>
          </Grp>
          <Grp m="ml-[3px]">
            <St w="w-[31px]">
              <S w={24} h={24}><rect x="5" y="1" width="7" height="8" stroke="#d8d8d8" /><circle cx="19" cy="12" r="4.500" stroke="#d8d8d8" /><path d="M8 15L3 23H13Z" stroke="#d8d8d8" /></S>
            </St>
          </Grp>
          <div className="ml-[3px] h-[30px] w-[4px] shrink-0 bg-[#3b4453]" />
          <Grp m="ml-[3px]">
            <St w="w-[30px]">
              <S w={20} h={20}><rect x="0.500" y="0.500" width="19" height="19" stroke="#b8bcc2" /><path d="M12 4H17V8M17 4L12 9M8 16H3V12M3 16L8 11" stroke="#d8d8d8" /></S>
            </St>
            <St w="w-[29px]">
              <S w={20} h={18}><rect width="20" height="3" fill="#d8d8d8" /><rect y="7" width="20" height="3" fill="#d8d8d8" /><rect y="14" width="20" height="3" fill="#d8d8d8" /></S>
            </St>
          </Grp>
        </div>
      </div>
    </div>
  );
};

export default App;
